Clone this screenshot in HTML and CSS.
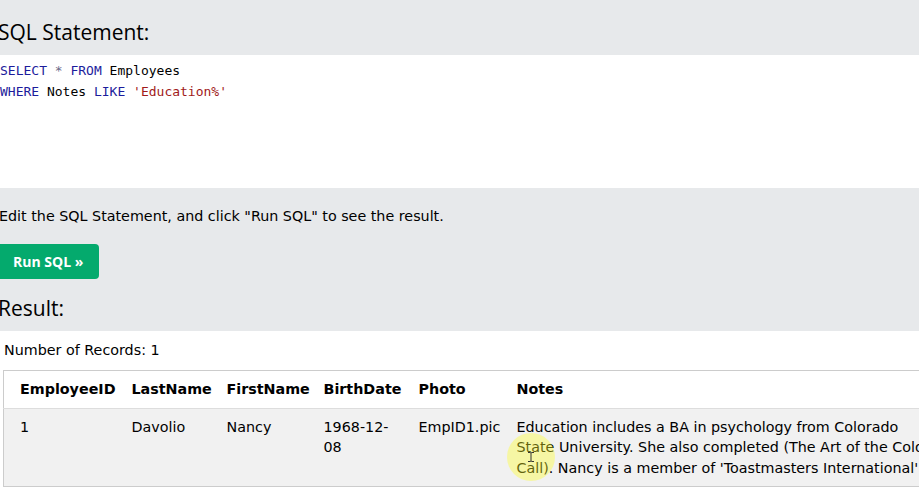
FILE: index.html
```html
<!DOCTYPE html>
<html lang="en">
<head>
<meta charset="utf-8">
<title>SQL Tryit</title>
<link rel="stylesheet" href="styles.css">
</head>
<body>
<div class="page">
  <section class="band band-top">
    <h3 class="title">SQL Statement:</h3>
  </section>
  <div class="code">
    <div class="code-line"><span class="kw">SELECT</span> <span class="op">*</span> <span class="kw">FROM</span> Employees</div>
    <div class="code-line"><span class="kw">WHERE</span> Notes <span class="kw">LIKE</span> <span class="str">'Education%'</span></div>
  </div>
  <section class="band band-bottom">
    <p class="hint">Edit the SQL Statement, and click "Run SQL" to see the result.</p>
    <button class="run" type="button">Run SQL »</button>
    <h3 class="title result-title">Result:</h3>
  </section>
  <section class="result">
    <div class="count">Number of Records: 1</div>
    <table class="grid">
      <colgroup>
        <col class="c1"><col class="c2"><col class="c3"><col class="c4"><col class="c5"><col class="c6">
      </colgroup>
      <thead>
        <tr>
          <th>EmployeeID</th><th>LastName</th><th>FirstName</th><th>BirthDate</th><th>Photo</th><th>Notes</th>
        </tr>
      </thead>
      <tbody>
        <tr>
          <td>1</td><td>Davolio</td><td>Nancy</td><td>1968-12-08</td><td>EmpID1.pic</td><td class="notes">Education includes a BA in psychology from Colorado<br>State University. She also completed (The Art of the Cold<br>Call). Nancy is a member of 'Toastmasters International'.</td>
        </tr>
      </tbody>
    </table>
  </section>
  <div class="cursor-halo">
    <svg class="ibeam" width="8" height="10" viewBox="0 0 8 10"><path d="M1 0.5h2.2q0.8 0 0.8 0.8q0-0.8 0.8-0.8H7M4 1.3v7.4M1 9.5h2.2q0.8 0 0.8-0.8q0 0.8 0.8 0.8H7" fill="none" stroke="#333" stroke-width="1"/></svg>
  </div>
</div>
</body>
</html>
```
FILE: styles.css
```css
html, body {
  margin: 0;
  padding: 0;
  overflow: hidden;
  background: #ffffff;
}
body {
  font-family: "DejaVu Sans", Verdana, sans-serif;
  font-size: 14.3px;
  color: #000;
}
.page {
  position: relative;
  width: 919px;
  height: 497px;
  overflow: hidden;
}
.band {
  background: #e7e9eb;
}
.band-top {
  height: 55px;
  box-sizing: border-box;
  padding-top: 17px;
}
.title {
  margin: 0 0 0 -2px;
  font-family: "Open Sans", "Noto Sans", sans-serif;
  font-weight: 400;
  font-size: 21px;
  line-height: 30px;
  color: #000;
}
.code {
  height: 133px;
  box-sizing: border-box;
  padding-top: 5px;
  background: #fff;
  font-family: "DejaVu Sans Mono", "Liberation Mono", monospace;
  font-size: 13px;
  line-height: 21px;
  color: #000;
}
.code-line { white-space: pre; }
.kw { color: #1c1c9c; }
.op { color: #6b6b8a; }
.str { color: #a11a1a; }
.band-bottom {
  height: 143px;
  box-sizing: border-box;
  padding-top: 18px;
  display: flex;
  flex-direction: column;
  align-items: flex-start;
}
.hint {
  margin: 0 0 0 -1px;
  line-height: 21px;
  color: #000;
}
.run {
  margin: 17px 0 0 -5px;
  height: 35px;
  padding: 0 16px 0 18px;
  border: none;
  border-radius: 4px;
  background: #04aa6d;
  color: #fff;
  font-family: "Open Sans", "Noto Sans", sans-serif;
  font-weight: 700;
  font-size: 14px;
}
.result-title {
  margin-top: 14px;
}
.result {
  padding: 9px 0 0 3px;
}
.count {
  margin-left: 1px;
  line-height: 21px;
  margin-bottom: 9px;
}
.grid {
  border-collapse: collapse;
  table-layout: fixed;
  width: 965px;
  border: 1px solid #cccccc;
}
.c1 { width: 120px; }
.c2 { width: 95px; }
.c3 { width: 97px; }
.c4 { width: 95px; }
.c5 { width: 98px; }
.c6 { width: 460px; }
.grid th, .grid td {
  padding: 8px;
  text-align: left;
  vertical-align: top;
  line-height: 20.5px;
}
.grid th:first-child, .grid td:first-child {
  padding-left: 16px;
}
.grid th {
  font-weight: 700;
  background: #fff;
  border-bottom: 1px solid #dddddd;
}
.grid td {
  background: #f1f1f1;
}
.grid td.notes {
  white-space: nowrap;
}
.cursor-halo {
  position: absolute;
  left: 507px;
  top: 433px;
  width: 48px;
  height: 48px;
  border-radius: 50%;
  background: rgba(255, 255, 40, 0.38);
  display: flex;
  align-items: center;
  justify-content: center;
}
.ibeam {
  display: block;
}
```
